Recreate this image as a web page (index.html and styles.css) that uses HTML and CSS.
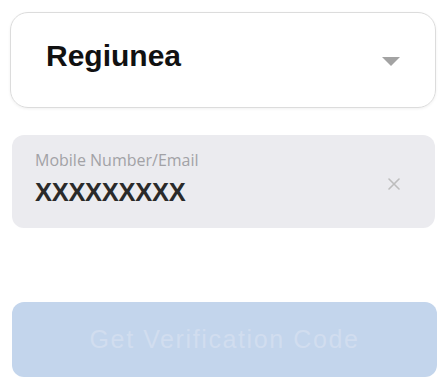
FILE: index.html
```html
<!DOCTYPE html>
<html lang="en">
<head>
  <meta charset="UTF-8" />
  <meta name="viewport" content="width=device-width, initial-scale=1.0"/>
  <title>Login</title>
  <link rel="stylesheet" href="styles.css">
</head>
<body>

  <!-- Login Form -->
  <form class="login-form">
    <div class="region-select">
      <span class="region-text">Regiunea</span>
      <svg class="region-arrow" width="18" height="9" viewBox="0 0 18 9">
        <path d="M0 0 H18 L9 9 Z" fill="#a3a3a3"/>
      </svg>
    </div>

    <div class="account-field">
      <div class="account-inner">
        <label class="account-label">Mobile Number/Email</label>
        <div class="account-value">XXXXXXXXX</div>
      </div>
      <svg class="clear-icon" width="12" height="12" viewBox="0 0 12 12">
        <path d="M1 1 L11 11 M11 1 L1 11" stroke="#bdbdbd" stroke-width="1.6" stroke-linecap="round"/>
      </svg>
    </div>

    <button type="button" class="form-submit" disabled>Get Verification Code</button>
  </form>

</body>
</html>
```

FILE: styles.css
```css
* {
  box-sizing: border-box;
  margin: 0;
  padding: 0;
}

html, body {
  background: #fff;
  font-family: 'Liberation Sans', Arial, sans-serif;
}

.login-form {
  display: flex;
  flex-direction: column;
  padding: 12px 4px 0 10px;
}

.region-select {
  display: flex;
  align-items: center;
  justify-content: space-between;
  height: 96px;
  padding: 0 35px 0 35px;
  border: 1.5px solid #dcdcdc;
  border-radius: 18px;
  box-shadow: 0 1px 3px rgba(0, 0, 0, 0.06);
}

.region-text {
  font-size: 30px;
  font-weight: bold;
  color: #111;
  margin-top: -8px;
}

.region-arrow {
  margin-top: 2px;
}

.account-field {
  display: flex;
  align-items: center;
  justify-content: space-between;
  height: 93px;
  margin: 27px 1px 0 2px;
  padding: 0 35px 0 23px;
  background: #ebebef;
  border-radius: 12px;
}

.account-inner {
  display: flex;
  flex-direction: column;
  gap: 7px;
  margin-top: -8px;
}

.account-label {
  font-family: 'Open Sans', sans-serif;
  font-size: 16px;
  color: #a2a2a6;
  letter-spacing: 0;
}

.account-value {
  font-size: 25.5px;
  font-weight: bold;
  color: #2a2a2a;
  letter-spacing: -0.3px;
}

.clear-icon {
  margin-top: 4px;
}

.form-submit {
  height: 75px;
  margin: 74px -1px 0 2px;
  border: none;
  border-radius: 12px;
  background: #c3d5ec;
  color: #d1ddef;
  font-family: 'Liberation Sans', Arial, sans-serif;
  font-size: 25px;
  letter-spacing: 1.6px;
}
```
